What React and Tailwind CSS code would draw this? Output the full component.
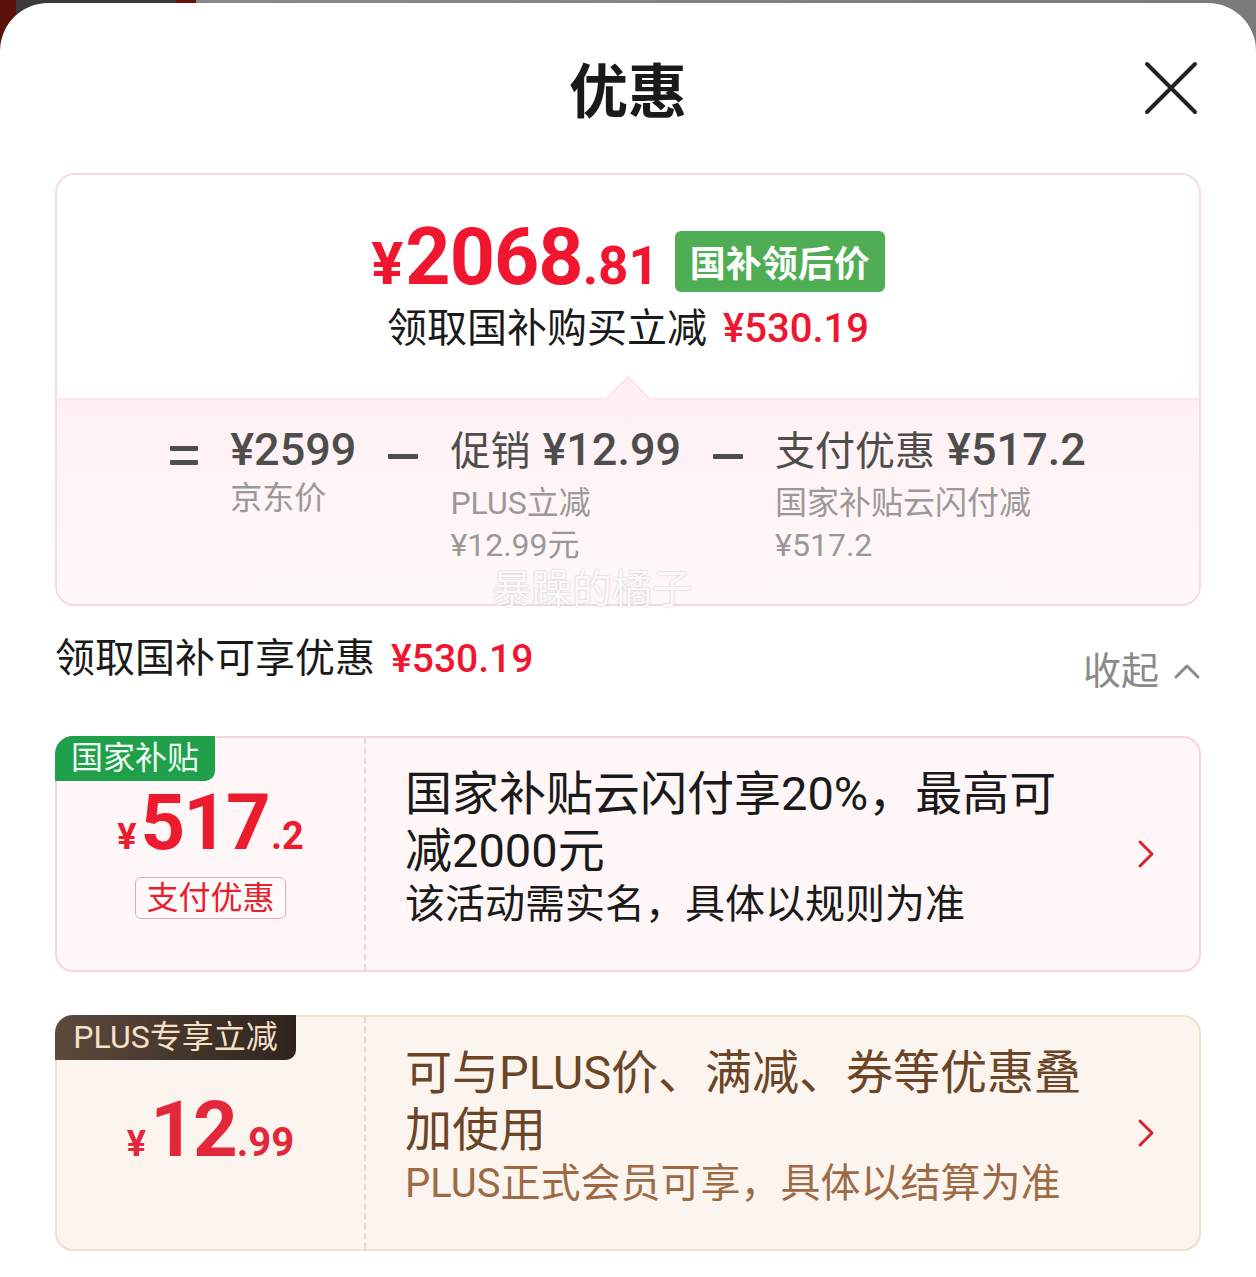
import React from "react";

function Chevron({ color = "#d42630" }) {
  return (
    <svg width="18" height="30" viewBox="0 0 18 30" fill="none">
      <path d="M3 3 L15 15 L3 27" stroke={color} strokeWidth="3" strokeLinecap="round" strokeLinejoin="round" />
    </svg>
  );
}

function Bar({ w = 28 }) {
  return <div className="h-[5px] rounded-[1px] bg-[#4d4d4d]" style={{ width: w }} />;
}

export default function App() {
  return (
    <div className="w-[1256px] h-[1277px] overflow-hidden bg-[linear-gradient(90deg,#5a1209_0,#5a1209_16px,#3b3b3b_16px,#3b3b3b_176px,#6a0f0a_176px,#6a0f0a_196px,#8a8a8a_196px,#7a7a7a_100%)] font-[Roboto,'Noto_Sans_CJK_SC',sans-serif]">
      <div className="mt-[3px] h-[1274px] bg-white rounded-t-[48px] px-[55px] relative">
        {/* header */}
        <div className="h-[170px] flex justify-center">
          <div className="mt-[50px] leading-[70px] text-[59px] font-bold text-[#1a1a1a] font-['Noto_Sans_CJK_SC',sans-serif]">优惠</div>
        </div>
        <svg className="absolute right-[58px] top-[58px]" width="54" height="54" viewBox="0 0 54 54" fill="none">
          <path d="M3 3 L51 51 M51 3 L3 51" stroke="#222" strokeWidth="4" strokeLinecap="round" />
        </svg>

        {/* summary card */}
        <div className="border-2 border-[#f8d9df] rounded-[20px]">
          <div className="h-[223px] bg-white rounded-t-[18px] flex flex-col items-center pt-[42px]">
            <div className="flex items-center gap-[16px]">
              <div className="flex items-baseline text-[#f0162f] font-bold leading-[80px]">
                <span className="text-[60px] mr-[2px]">¥</span>
                <span className="text-[79px] tracking-[-1px]">2068</span>
                <span className="text-[53px]">.81</span>
              </div>
              <div className="h-[61px] px-[15px] rounded-[6px] bg-[#4fae53] text-white text-[36px] font-bold leading-[61px] font-['Noto_Sans_CJK_SC',sans-serif]">国补领后价</div>
            </div>
            <div className="-mt-[2px] flex items-baseline gap-[16px] leading-[50px]">
              <span className="text-[40px] text-[#1a1a1a]">领取国补购买立减</span>
              <span className="text-[40px] font-medium text-[#f0162f]">¥530.19</span>
            </div>
          </div>
          <div className="relative h-[206px] rounded-b-[18px] border-t-2 border-[#fde4e8] bg-[linear-gradient(180deg,#fff1f3_0%,#fff8f9_100%)]">
            <div className="absolute left-1/2 -translate-x-1/2 -top-[18px] w-[30px] h-[30px] rotate-45 border-l-2 border-t-2 border-[#fde4e8] bg-[#fff1f3]" />
            <div className="relative flex justify-center gap-[32px] pt-[22px]">
              <div className="h-[56px] flex flex-col justify-center gap-[9px] pt-[10px]">
                <Bar w={28} />
                <Bar w={28} />
              </div>
              <div className="flex flex-col">
                <div className="h-[56px] flex items-baseline leading-[56px] text-[45px] font-medium text-[#4d4d4d]">¥2599</div>
                <span className="text-[32px] text-[#999] leading-[40px]">京东价</span>
              </div>
              <div className="h-[56px] flex items-center pt-[12px]"><Bar w={30} /></div>
              <div className="flex flex-col">
                <div className="h-[56px] flex items-baseline leading-[56px] text-[#4d4d4d] gap-[12px]">
                  <span className="text-[40px]">促销</span>
                  <span className="text-[45px] font-medium">¥12.99</span>
                </div>
                <span className="mt-[4px] text-[32px] text-[#999] leading-[42px]">PLUS立减</span>
                <span className="text-[32px] text-[#999] leading-[42px]">¥12.99元</span>
              </div>
              <div className="h-[56px] flex items-center pt-[12px]"><Bar w={30} /></div>
              <div className="flex flex-col">
                <div className="h-[56px] flex items-baseline leading-[56px] text-[#4d4d4d] gap-[12px]">
                  <span className="text-[40px]">支付优惠</span>
                  <span className="text-[45px] font-medium">¥517.2</span>
                </div>
                <span className="mt-[4px] text-[32px] text-[#999] leading-[42px]">国家补贴云闪付减</span>
                <span className="text-[32px] text-[#999] leading-[42px]">¥517.2</span>
              </div>
            </div>
            <div className="absolute left-[435px] top-[168px] text-[40px] leading-[36px] text-white/90 [text-shadow:0_0_2px_rgba(120,120,120,0.5)] font-['Noto_Sans_CJK_SC',sans-serif]">暴躁的橘子</div>
          </div>
        </div>

        {/* section heading */}
        <div className="mt-[25px] h-[56px] flex items-center justify-between">
          <div className="flex items-baseline gap-[16px]">
            <span className="text-[40px] text-[#1a1a1a] leading-[50px]">领取国补可享优惠</span>
            <span className="text-[39px] font-medium text-[#f0162f] leading-[50px]">¥530.19</span>
          </div>
          <div className="flex items-center gap-[14px] pt-[24px]">
            <span className="text-[38px] text-[#8a8a8a] leading-[50px]">收起</span>
            <svg width="28" height="18" viewBox="0 0 28 18" fill="none">
              <path d="M3 15 L14 4 L25 15" stroke="#8a8a8a" strokeWidth="3" strokeLinecap="round" strokeLinejoin="round" />
            </svg>
          </div>
        </div>

        {/* card 1 */}
        <div className="mt-[49px] h-[236px] flex border-2 border-[#f7d5dc] bg-[#fff6f7] rounded-[18px] relative">
          <div className="absolute -left-[2px] -top-[2px] h-[45px] w-[160px] bg-[#20a04b] rounded-tl-[18px] rounded-br-[10px] text-[#f2fff4] text-[32px] leading-[45px] text-center">国家补贴</div>
          <div className="w-[309px] shrink-0 flex flex-col items-center pt-[45px] border-r-2 border-dashed border-[#ecd6d9]">
            <div className="flex items-baseline text-[#ec1b2e] font-bold leading-[80px]">
              <span className="text-[36px] mr-[4px]">¥</span>
              <span className="text-[78px] tracking-[-2px]">517</span>
              <span className="text-[38px] ml-[2px]">.2</span>
            </div>
            <div className="h-[42px] px-[10px] border border-[#eba7ae] rounded-[6px] bg-[#fffafa] text-[#e8202f] text-[32px] leading-[40px]">支付优惠</div>
          </div>
          <div className="flex-1 flex pl-[39px] pr-[44px]">
            <div className="flex-1 pt-[27px]">
              <div className="text-[47px] leading-[57px] text-[#1a1a1a]">国家补贴云闪付享20%，最高可<br />减2000元</div>
              <div className="text-[40px] leading-[52px] text-[#1a1a1a]">该活动需实名，具体以规则为准</div>
            </div>
            <div className="self-center"><Chevron /></div>
          </div>
        </div>

        {/* card 2 */}
        <div className="mt-[43px] h-[236px] flex border-2 border-[#f0e0cf] bg-[#fbf4ef] rounded-[18px] relative">
          <div className="absolute -left-[2px] -top-[2px] h-[45px] w-[241px] bg-[linear-gradient(90deg,#5d4a3d,#2f241d)] rounded-tl-[18px] rounded-br-[10px] text-[#f6e0c8] text-[32px] leading-[45px] text-center">PLUS专享立减</div>
          <div className="w-[309px] shrink-0 flex items-center justify-center pt-[8px] border-r-2 border-dashed border-[#e6d8cc]">
            <div className="flex items-baseline text-[#e2283a] font-bold leading-[80px]">
              <span className="text-[36px] mr-[4px]">¥</span>
              <span className="text-[78px] tracking-[-2px]">12</span>
              <span className="text-[40px] ml-[1px]">.99</span>
            </div>
          </div>
          <div className="flex-1 flex pl-[39px] pr-[44px]">
            <div className="flex-1 pt-[27px]">
              <div className="text-[47px] leading-[57px] text-[#6b4526]">可与PLUS价、满减、券等优惠叠<br />加使用</div>
              <div className="text-[40px] leading-[52px] text-[#9c6b45]">PLUS正式会员可享，具体以结算为准</div>
            </div>
            <div className="self-center"><Chevron /></div>
          </div>
        </div>
      </div>
    </div>
  );
}
